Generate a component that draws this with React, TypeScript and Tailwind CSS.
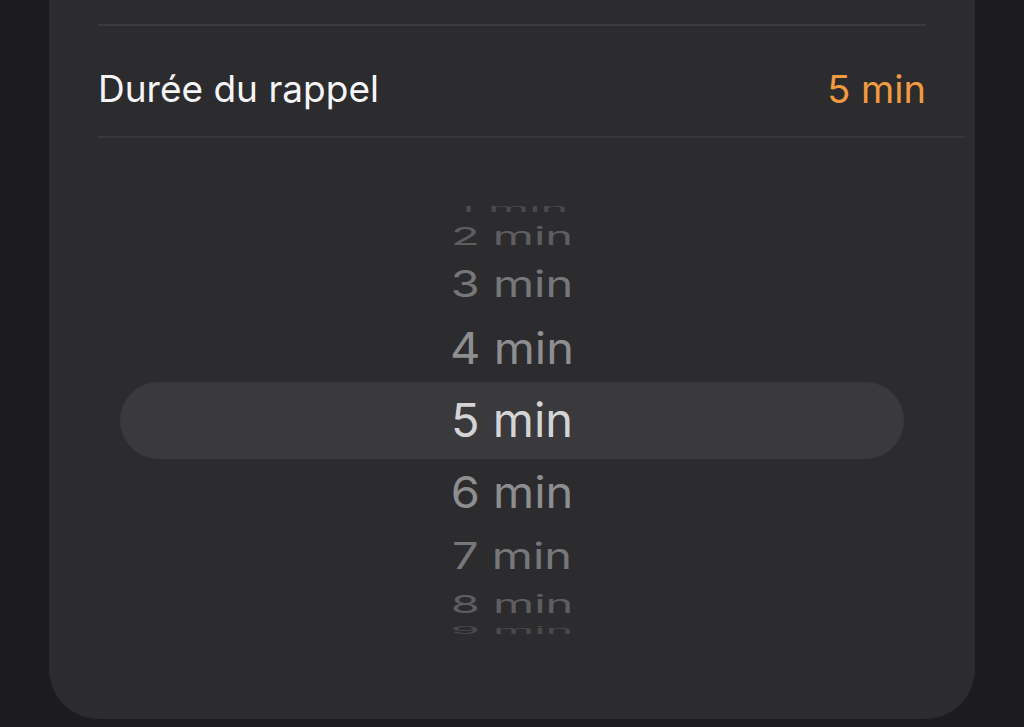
import React from 'react';

const R = 219;
const STEP = (19.5 * Math.PI) / 180;
const items = [1, 2, 3, 4, 5, 6, 7, 8, 9];
const SELECTED = 5;

const shades = ['text-[#d4d4d6]', 'text-[#8e8e90]', 'text-[#77777a]', 'text-[#5e5e61]', 'text-[#4a4a4c]'];

function Wheel() {
  return (
    <div className="relative mt-[68px] flex h-[428px] flex-col justify-center overflow-hidden">
      <div className="absolute left-[71px] right-[71px] top-[176px] h-[77px] rounded-full bg-[#3a3a3c]" />
      <div className="relative -mt-[1px] flex shrink-0 flex-col">
        {items.map(n => {
          const k = n - SELECTED;
          const a = k * STEP;
          const h = R * (Math.sin(a + STEP / 2) - Math.sin(a - STEP / 2));
          const s = Math.cos(a);
          return (
            <div key={n} className="flex items-center justify-center overflow-visible" style={{ height: h }}>
              <span
                className={`text-[47px] leading-none whitespace-nowrap ${shades[Math.abs(k)]}`}
                style={{ transform: `scaleY(${s})` }}
              >
                {n} min
              </span>
            </div>
          );
        })}
      </div>
    </div>
  );
}

export default function App() {
  return (
    <div className="h-[727px] w-full overflow-hidden bg-[#1c1c1e] px-[49px] pb-[8px] font-['Inter','Noto_Sans',sans-serif]">
      <div className="flex h-full flex-col rounded-b-[50px] bg-[#2c2c2e]">
        <div className="h-[24px]" />
        <div className="mx-[49px] h-[2px] bg-[#3b3b3d]" />
        <div className="flex h-[110px] items-center justify-between px-[49px] pt-[16px]">
          <span className="text-[37px] text-[#f5f5f7]">Durée du rappel</span>
          <span className="text-[38px] text-[#f29a40]">5 min</span>
        </div>
        <div className="ml-[49px] mr-[10px] h-[2px] bg-[#38383a]" />
        <Wheel />
      </div>
    </div>
  );
}
